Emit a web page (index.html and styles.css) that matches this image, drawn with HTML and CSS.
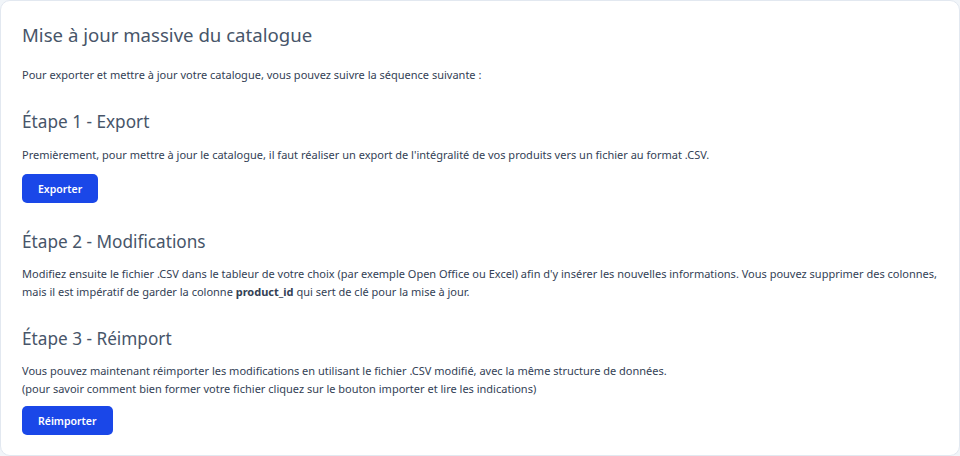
FILE: index.html
```html
<!DOCTYPE html>
<html lang="fr">
<head>
    <meta charset="UTF-8">
    <meta name="viewport" content="width=device-width, initial-scale=1.0">
    <title>Mise à jour massive du catalogue</title>
    <link rel="stylesheet" href="styles.css">
</head>
<body>
    <div class="card">
        <h1>Mise à jour massive du catalogue</h1>
        <p class="intro">Pour exporter et mettre à jour votre catalogue, vous pouvez suivre la séquence suivante :</p>

        <div class="step">
            <h2>Étape 1 - Export</h2>
            <p>Premièrement, pour mettre à jour le catalogue, il faut réaliser un export de l'intégralité de vos produits vers un fichier au format .CSV.</p>
            <button type="button">Exporter</button>
        </div>

        <div class="step">
            <h2>Étape 2 - Modifications</h2>
            <p>Modifiez ensuite le fichier .CSV dans le tableur de votre choix (par exemple Open Office ou Excel) afin d'y insérer les nouvelles informations. Vous pouvez supprimer des colonnes, mais il est impératif de garder la colonne <strong>product_id</strong> qui sert de clé pour la mise à jour.</p>
        </div>

        <div class="step">
            <h2>Étape 3 - Réimport</h2>
            <p>Vous pouvez maintenant réimporter les modifications en utilisant le fichier .CSV modifié, avec la même structure de données.<br>
            (pour savoir comment bien former votre fichier cliquez sur le bouton importer et lire les indications)</p>
            <button type="button">Réimporter</button>
        </div>
    </div>
</body>
</html>
```

FILE: styles.css
```css
/* General styling */
body {
    font-family: 'Noto Sans', 'Open Sans', sans-serif;
    margin: 0;
    padding: 0;
    background-color: #f1f5f9;
    color: #475569;
}

/* Main card */
.card {
    height: 456px;
    box-sizing: border-box;
    padding: 18px 21px;
    background: #fff;
    border: 1px solid #e2e8f0;
    border-radius: 10px;
}

h1 {
    font-size: 18.6px;
    font-weight: 400;
    margin: 2px 0 0;
    line-height: 28px;
}

h2 {
    font-size: 17.2px;
    font-weight: 400;
    margin: 0 0 12px;
    line-height: 24px;
}

p {
    font-size: 11px;
    line-height: 18px;
    margin: 0;
    color: #334155;
}

.intro {
    margin: 17px 0 26px;
}

/* Steps */
.step {
    margin-bottom: 27px;
}

.step + .step h2 {
    margin-bottom: 11px;
}

.step:nth-of-type(2) {
    margin-bottom: 26px;
}

.step:last-child button {
    margin-top: 8px;
}

strong {
    font-weight: 700;
}

button {
    margin-top: 10px;
    height: 29px;
    padding: 0 16px;
    font-family: inherit;
    font-size: 10.5px;
    font-weight: 600;
    color: #fff;
    background-color: #1a47e8;
    border: none;
    border-radius: 5px;
    cursor: pointer;
}

button:hover {
    background-color: #1536b8;
}
```
